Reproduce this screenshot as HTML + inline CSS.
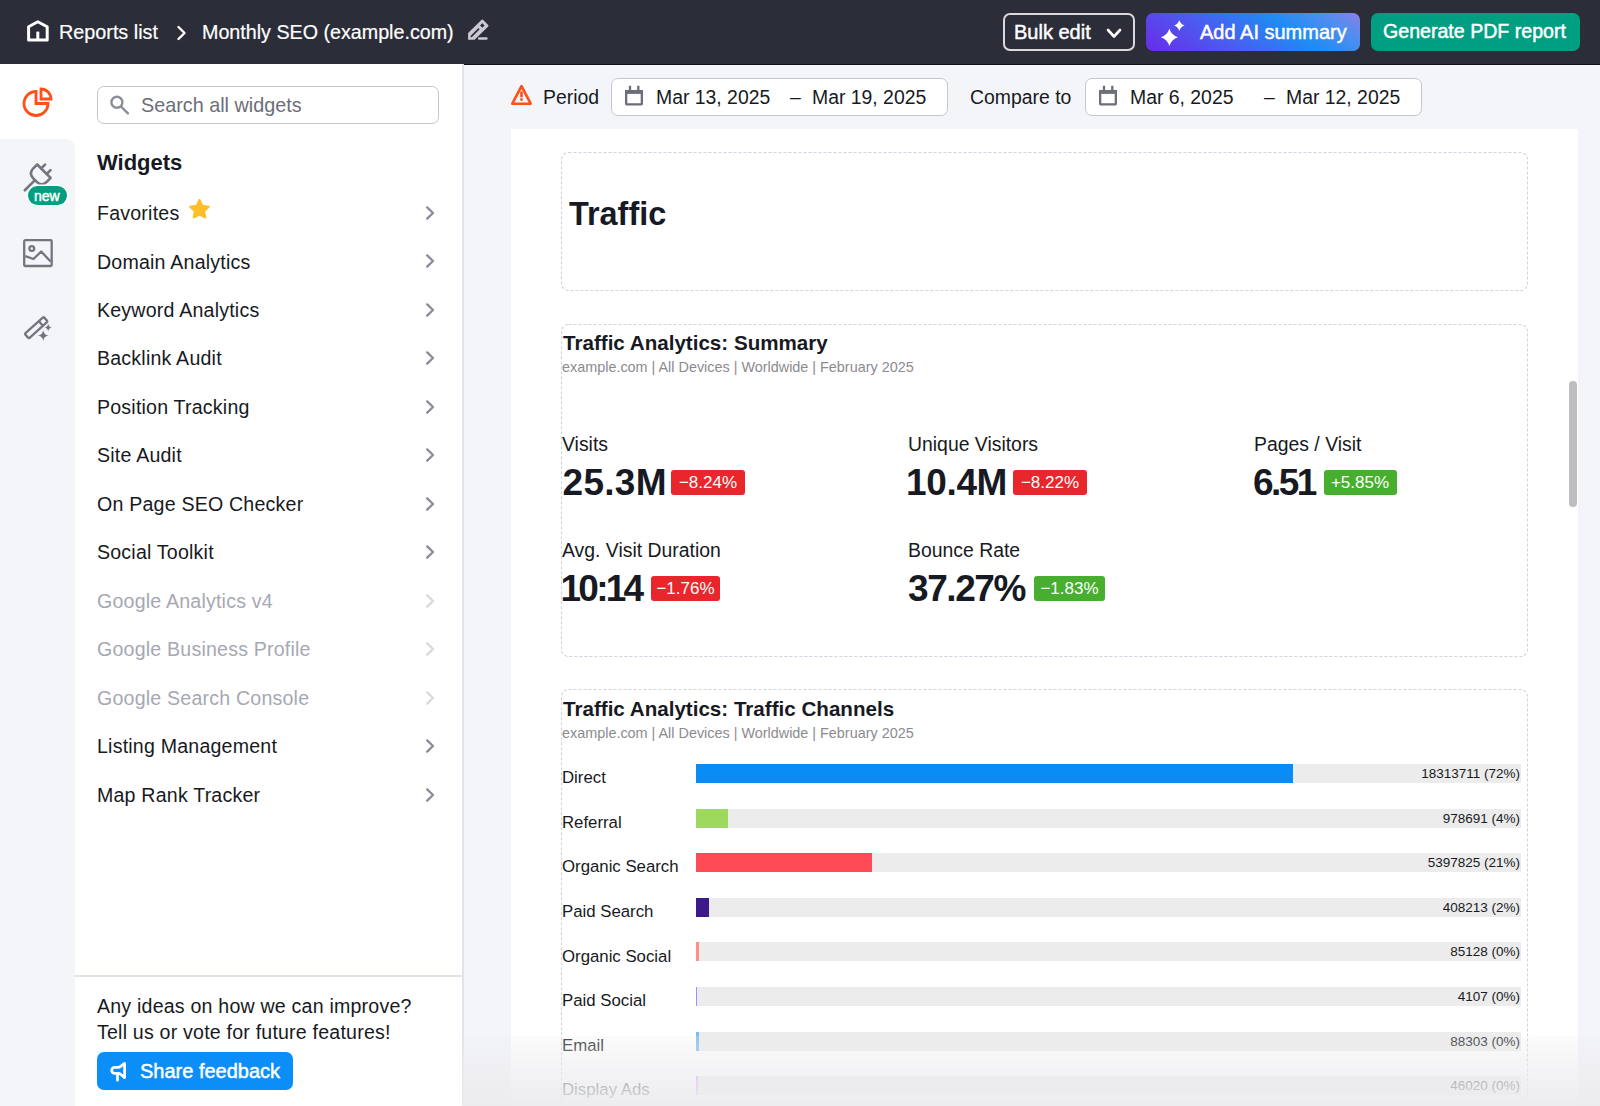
<!DOCTYPE html>
<html><head><meta charset="utf-8">
<style>
*{box-sizing:border-box;margin:0;padding:0}
html,body{width:1600px;height:1106px;overflow:hidden;background:#f4f5f9;font-family:"Liberation Sans",sans-serif;color:#171a22}
.a{position:absolute}
.t{position:absolute;white-space:pre;line-height:1}
#hdr{left:0;top:0;width:1600px;height:64.5px;background:#2b2d38;border-bottom:1.5px solid #0f1119}
.btn{position:absolute;border-radius:7px}
.bt{-webkit-text-stroke:.45px #fff}
.hd{-webkit-text-stroke:.2px #fff}
#rail{left:0;top:139px;width:75px;height:967px;background:#f4f5f9;border-top-right-radius:9px}
#side{left:0;top:64px;width:462px;height:1042px;background:#fff}
#sideb{left:462px;top:64px;width:1.5px;height:1042px;background:#e1e2ea}
.item{font-size:19.6px;color:#171a22;letter-spacing:.2px}
.dis{color:#a6a8b3}
.chev{position:absolute;left:425px;width:10px;height:14px}
#page{left:511px;top:129px;width:1067px;height:1000px;background:#fff}
.lbl{font-size:19.4px;color:#171a22}
.val{font-size:37px;font-weight:700;color:#171a22}
.badge{position:absolute;height:25px;border-radius:3px;color:#fff;font-size:17px;line-height:25px;text-align:center}
.red{background:#e8262b}
.grn{background:#47ae30}
.wt{font-size:20.6px;font-weight:700;color:#171a22}
.sub{font-size:14.4px;color:#8b8b8f}
.row{font-size:16.8px;color:#171a22}
.trk{position:absolute;left:696px;width:825px;height:19px;background:#ececec}
.bar{position:absolute;left:0;top:0;height:19px}
.num{position:absolute;right:1px;top:0;font-size:13.5px;line-height:19px;color:#171a22;white-space:pre}
#fade{left:462px;top:1036px;width:1138px;height:70px;background:linear-gradient(to bottom,rgba(236,236,239,.2) 0%,rgba(236,236,239,.62) 50%,rgba(236,236,239,.96) 100%)}
</style></head><body>

<!-- HEADER -->
<div id="hdr" class="a"></div>
<svg class="a" style="left:26px;top:19px" width="24" height="24" viewBox="0 0 24 24" fill="none" stroke="#fff" stroke-width="3" stroke-linejoin="round"><path d="M2.6 7.7 L11.8 2.7 L21.2 7.7 V21.1 H2.6 Z"/><path d="M11.8 12.6 V21"/></svg>
<div class="t hd" style="left:59px;top:22.5px;font-size:19.8px;color:#fff">Reports list</div>
<svg class="a" style="left:176px;top:25px" width="12" height="16" viewBox="0 0 12 16" fill="none" stroke="#fff" stroke-width="2.4" stroke-linecap="round" stroke-linejoin="round"><path d="M2.5 2 L8.5 8 L2.5 14"/></svg>
<div class="t hd" style="left:202px;top:22.5px;font-size:19.7px;color:#fff">Monthly SEO (example.com)</div>
<svg class="a" style="left:467px;top:19px" width="23" height="23" viewBox="0 0 23 23"><path fill="#c8c9d2" d="M1.1 14.1 L14.6 0.8 Q15.3 0.1 16 0.8 L21.2 6 Q21.9 6.7 21.2 7.4 L7.6 20.8 H1.1 Z"/><path d="M4.4 17.4 L11.6 10.2" stroke="#2b2d38" stroke-width="1.7" stroke-linecap="round"/><rect x="13.7" y="5" width="3.2" height="3.2" fill="#2b2d38" transform="rotate(45 15.3 6.6)"/><path d="M12.2 19.6 H19.4" stroke="#c8c9d2" stroke-width="2.5" stroke-linecap="round"/></svg>

<div class="btn" style="left:1003px;top:13px;width:132px;height:38px;border:2px solid #d9dadf"></div>
<div class="t bt" style="left:1014px;top:22px;font-size:20px;color:#fff">Bulk edit</div>
<svg class="a" style="left:1105px;top:27px" width="18" height="13" viewBox="0 0 18 13" fill="none" stroke="#fff" stroke-width="2.6" stroke-linecap="round" stroke-linejoin="round"><path d="M3 3 L9 9.5 L15 3"/></svg>

<div class="btn" style="left:1146px;top:13px;width:214px;height:38px;background:linear-gradient(35deg,#6a2be8 0%,#4b5cf0 35%,#1e8cf3 65%,#4f8ef0 85%,#8a7fe9 100%)"></div>
<svg class="a" style="left:1159px;top:19px" width="28" height="28" viewBox="0 0 28 28" fill="#fff"><path d="M10.40 9.70 Q12.55 16.15 19.00 18.30 Q12.55 20.45 10.40 26.90 Q8.25 20.45 1.80 18.30 Q8.25 16.15 10.40 9.70 Z M20.30 1.30 Q21.62 5.27 25.60 6.60 Q21.62 7.92 20.30 11.90 Q18.98 7.92 15.00 6.60 Q18.98 5.27 20.30 1.30 Z"/></svg>
<div class="t bt" style="left:1200px;top:22px;font-size:20px;color:#fff">Add AI summary</div>

<div class="btn" style="left:1371px;top:13px;width:209px;height:38px;background:#009f81"></div>
<div class="t bt" style="left:1383px;top:22px;font-size:19.6px;color:#fff">Generate PDF report</div>

<!-- LEFT RAIL -->
<div id="side" class="a"></div>
<div id="rail" class="a"></div>
<div id="sideb" class="a"></div>



<!-- MAIN TOOLBAR -->
<svg class="a" style="left:508px;top:81px" width="28" height="28" viewBox="0 0 28 28" fill="none" stroke="#fe5017" stroke-width="2.6" stroke-linejoin="round" stroke-linecap="round"><path d="M13.5 5.2 L22.7 22.7 H4.3 Z"/><path d="M13.5 11.6 V15.2"/><path d="M13.5 18.4 V18.7"/></svg>
<div class="t lbl" style="left:543px;top:87.5px">Period</div>
<div class="a" style="left:611px;top:78px;width:337px;height:38px;border:1.5px solid #c5c7cf;border-radius:7px;background:#fff"></div>
<svg class="a" style="left:622px;top:84px" width="24" height="24" viewBox="0 0 24 24" fill="none" stroke="#6c6e79" stroke-width="2.3"><rect x="4.15" y="7.15" width="15.7" height="13.2" rx="0.5"/><rect x="3" y="6" width="18" height="3.9" fill="#6c6e79" stroke="none"/><path d="M8 1.8 V6.5 M16.3 1.8 V6.5"/></svg>
<div class="t lbl" style="left:656px;top:87.5px">Mar 13, 2025</div>
<div class="t lbl" style="left:790px;top:87.5px">–</div>
<div class="t lbl" style="left:812px;top:87.5px">Mar 19, 2025</div>
<div class="t lbl" style="left:970px;top:87.5px">Compare to</div>
<div class="a" style="left:1085px;top:78px;width:337px;height:38px;border:1.5px solid #c5c7cf;border-radius:7px;background:#fff"></div>
<svg class="a" style="left:1096px;top:84px" width="24" height="24" viewBox="0 0 24 24" fill="none" stroke="#6c6e79" stroke-width="2.3"><rect x="4.15" y="7.15" width="15.7" height="13.2" rx="0.5"/><rect x="3" y="6" width="18" height="3.9" fill="#6c6e79" stroke="none"/><path d="M8 1.8 V6.5 M16.3 1.8 V6.5"/></svg>
<div class="t lbl" style="left:1130px;top:87.5px">Mar 6, 2025</div>
<div class="t lbl" style="left:1264px;top:87.5px">–</div>
<div class="t lbl" style="left:1286px;top:87.5px">Mar 12, 2025</div>

<!-- PAGE -->
<div id="page" class="a"></div>
<div class="a" style="left:1569px;top:381px;width:8px;height:126px;border-radius:4px;background:#bdbdc1"></div>
<svg class="a" style="left:560px;top:151px" width="970" height="960" viewBox="0 0 970 960" fill="none" stroke="#d2d3de" stroke-width="1.1" stroke-dasharray="3 2">
<rect x="1.5" y="1.5" width="966" height="138" rx="7"/>
<rect x="1.5" y="173.5" width="966" height="332" rx="7"/>
<rect x="1.5" y="538.5" width="966" height="460" rx="7"/>
</svg>
<div class="t" style="left:569px;top:198px;font-size:32.4px;font-weight:700;color:#171a22">Traffic</div>

<div class="t wt" style="left:563px;top:333px">Traffic Analytics: Summary</div>
<div class="t sub" style="left:562px;top:360px">example.com | All Devices | Worldwide | February 2025</div>
<div class="t lbl" style="left:562px;top:434.5px">Visits</div>
<div class="t val" style="left:562.5px;top:463.8px;letter-spacing:0.3px">25.3M</div>
<div class="badge red" style="left:671px;top:469.7px;width:74px">−8.24%</div>
<div class="t lbl" style="left:908px;top:434.5px">Unique Visitors</div>
<div class="t val" style="left:906px;top:463.8px;letter-spacing:-0.35px">10.4M</div>
<div class="badge red" style="left:1013px;top:469.7px;width:74px">−8.22%</div>
<div class="t lbl" style="left:1254px;top:434.5px">Pages / Visit</div>
<div class="t val" style="left:1253px;top:463.8px;letter-spacing:-2.6px">6.51</div>
<div class="badge grn" style="left:1323.5px;top:469.7px;width:73px">+5.85%</div>
<div class="t lbl" style="left:562px;top:541.0px">Avg. Visit Duration</div>
<div class="t val" style="left:560.5px;top:570.3px;letter-spacing:-2.75px">10:14</div>
<div class="badge red" style="left:651px;top:576.2px;width:69px">−1.76%</div>
<div class="t lbl" style="left:908px;top:541.0px">Bounce Rate</div>
<div class="t val" style="left:908px;top:570.3px;letter-spacing:-1.42px">37.27%</div>
<div class="badge grn" style="left:1034px;top:576.2px;width:71px">−1.83%</div>

<div class="t wt" style="left:563px;top:699px">Traffic Analytics: Traffic Channels</div>
<div class="t sub" style="left:562px;top:725.5px">example.com | All Devices | Worldwide | February 2025</div>
<div class="t row" style="left:562px;top:770.3px">Direct</div>
<div class="trk" style="top:764.2px"><div class="bar" style="width:596.7px;background:#0a8cf7"></div><div class="num">18313711 (72%)</div></div>
<div class="t row" style="left:562px;top:814.8px">Referral</div>
<div class="trk" style="top:808.8px"><div class="bar" style="width:31.9px;background:#9cd95c"></div><div class="num">978691 (4%)</div></div>
<div class="t row" style="left:562px;top:859.4px">Organic Search</div>
<div class="trk" style="top:853.3px"><div class="bar" style="width:175.9px;background:#ff4b55"></div><div class="num">5397825 (21%)</div></div>
<div class="t row" style="left:562px;top:903.9px">Paid Search</div>
<div class="trk" style="top:897.9px"><div class="bar" style="width:13.3px;background:#3c1a8b"></div><div class="num">408213 (2%)</div></div>
<div class="t row" style="left:562px;top:948.5px">Organic Social</div>
<div class="trk" style="top:942.4px"><div class="bar" style="width:2.8px;background:#ff8f80"></div><div class="num">85128 (0%)</div></div>
<div class="t row" style="left:562px;top:993.0px">Paid Social</div>
<div class="trk" style="top:987.0px"><div class="bar" style="width:1.2px;background:#a78bfa"></div><div class="num">4107 (0%)</div></div>
<div class="t row" style="left:562px;top:1037.6px">Email</div>
<div class="trk" style="top:1031.5px"><div class="bar" style="width:2.9px;background:#7dbcf5"></div><div class="num">88303 (0%)</div></div>
<div class="t row" style="left:562px;top:1082.1px">Display Ads</div>
<div class="trk" style="top:1076.0px"><div class="bar" style="width:1.5px;background:#d59cf0"></div><div class="num">46020 (0%)</div></div>
<div id="fade" class="a"></div>
<!-- RAIL ICONS -->
<svg class="a" style="left:22px;top:86px" width="32" height="32" viewBox="0 0 32 32" fill="none" stroke="#fe5017" stroke-width="2.8" stroke-linejoin="miter"><path d="M14 5.5 A12 12 0 1 0 26 17.5 H14 Z"/><path d="M19 3 A10 10 0 0 1 29 13 H19 Z"/></svg>
<svg class="a" style="left:22px;top:162px" width="32" height="32" viewBox="0 0 32 32" fill="none" stroke="#73767f" stroke-width="2.6" stroke-linecap="round" stroke-linejoin="round"><g transform="translate(21.9 9.2) rotate(45)"><path d="M-9.5 0 H9.5 V5.5 Q9.5 12.6 2.5 12.6 H-2.5 Q-9.5 12.6 -9.5 5.5 Z"/><path d="M0 12.6 V27"/><path d="M-3.9 0 V-5.5 M3.9 0 V-5.5"/></g></svg>
<div class="a" style="left:28px;top:185.5px;width:39px;height:19px;border-radius:10px;background:#009f81;box-shadow:0 0 0 1.6px #fff"></div>
<div class="t" style="left:34px;top:188.5px;font-size:14px;-webkit-text-stroke:.45px #fff;color:#fff">new</div>
<svg class="a" style="left:22px;top:238px" width="32" height="30" viewBox="0 0 32 30" fill="none" stroke="#73767f" stroke-width="2.3" stroke-linejoin="round"><rect x="2.2" y="2.2" width="27.5" height="25.8" rx="1"/><circle cx="9.8" cy="10.5" r="2.4"/><path d="M3.3 18.2 L11.5 21 L19.2 13.5 L28.6 23.5"/></svg>
<svg class="a" style="left:23px;top:313px" width="32" height="30" viewBox="0 0 32 30" stroke="#73767f" stroke-width="2.3" stroke-linejoin="round"><g transform="rotate(-42 13.2 14.7)"><rect x="0.5" y="11.6" width="25.4" height="6.2" rx="1" fill="none"/><path d="M19.5 11.6 V17.8" fill="none"/></g><path stroke="none" fill="#73767f" d="M20.2 17.2 Q20.9 21.9 25.6 22.6 Q20.9 23.3 20.2 28 Q19.5 23.3 14.8 22.6 Q19.5 21.9 20.2 17.2 Z M25.2 10.8 Q25.7 14.1 29 14.6 Q25.7 15.1 25.2 18.4 Q24.7 15.1 21.4 14.6 Q24.7 14.1 25.2 10.8 Z"/></svg>

<!-- SIDEBAR -->
<div class="a" style="left:97px;top:86px;width:342px;height:38px;border:1.5px solid #c5c7cf;border-radius:7px;background:#fff"></div>
<svg class="a" style="left:108px;top:94px" width="24" height="24" viewBox="0 0 24 24" fill="none" stroke="#8a8e9a" stroke-width="2.4" stroke-linecap="round"><circle cx="8.9" cy="8.2" r="5.5"/><path d="M12.9 12.3 L19.9 19.3"/></svg>
<div class="t" style="left:141px;top:96px;font-size:19.8px;color:#6c6e79">Search all widgets</div>
<div class="t" style="left:97px;top:152px;font-size:22px;font-weight:700;color:#171a22">Widgets</div>
<div class="t item" style="left:97px;top:203.5px">Favorites</div>
<svg class="a" style="left:423px;top:203.8px" width="14" height="18" viewBox="0 0 14 18" fill="none" stroke="#8a8e9b" stroke-width="2.4" stroke-linecap="round" stroke-linejoin="round"><path d="M4.2 3.4 L10 9 L4.2 14.6"/></svg>
<div class="t item" style="left:97px;top:253.0px">Domain Analytics</div>
<svg class="a" style="left:423px;top:252.3px" width="14" height="18" viewBox="0 0 14 18" fill="none" stroke="#8a8e9b" stroke-width="2.4" stroke-linecap="round" stroke-linejoin="round"><path d="M4.2 3.4 L10 9 L4.2 14.6"/></svg>
<div class="t item" style="left:97px;top:300.5px">Keyword Analytics</div>
<svg class="a" style="left:423px;top:300.8px" width="14" height="18" viewBox="0 0 14 18" fill="none" stroke="#8a8e9b" stroke-width="2.4" stroke-linecap="round" stroke-linejoin="round"><path d="M4.2 3.4 L10 9 L4.2 14.6"/></svg>
<div class="t item" style="left:97px;top:349.0px">Backlink Audit</div>
<svg class="a" style="left:423px;top:349.3px" width="14" height="18" viewBox="0 0 14 18" fill="none" stroke="#8a8e9b" stroke-width="2.4" stroke-linecap="round" stroke-linejoin="round"><path d="M4.2 3.4 L10 9 L4.2 14.6"/></svg>
<div class="t item" style="left:97px;top:397.5px">Position Tracking</div>
<svg class="a" style="left:423px;top:397.8px" width="14" height="18" viewBox="0 0 14 18" fill="none" stroke="#8a8e9b" stroke-width="2.4" stroke-linecap="round" stroke-linejoin="round"><path d="M4.2 3.4 L10 9 L4.2 14.6"/></svg>
<div class="t item" style="left:97px;top:446.0px">Site Audit</div>
<svg class="a" style="left:423px;top:446.3px" width="14" height="18" viewBox="0 0 14 18" fill="none" stroke="#8a8e9b" stroke-width="2.4" stroke-linecap="round" stroke-linejoin="round"><path d="M4.2 3.4 L10 9 L4.2 14.6"/></svg>
<div class="t item" style="left:97px;top:494.5px">On Page SEO Checker</div>
<svg class="a" style="left:423px;top:494.8px" width="14" height="18" viewBox="0 0 14 18" fill="none" stroke="#8a8e9b" stroke-width="2.4" stroke-linecap="round" stroke-linejoin="round"><path d="M4.2 3.4 L10 9 L4.2 14.6"/></svg>
<div class="t item" style="left:97px;top:543.0px">Social Toolkit</div>
<svg class="a" style="left:423px;top:543.3px" width="14" height="18" viewBox="0 0 14 18" fill="none" stroke="#8a8e9b" stroke-width="2.4" stroke-linecap="round" stroke-linejoin="round"><path d="M4.2 3.4 L10 9 L4.2 14.6"/></svg>
<div class="t item dis" style="left:97px;top:591.5px">Google Analytics v4</div>
<svg class="a" style="left:423px;top:591.8px" width="14" height="18" viewBox="0 0 14 18" fill="none" stroke="#d9dadf" stroke-width="2.4" stroke-linecap="round" stroke-linejoin="round"><path d="M4.2 3.4 L10 9 L4.2 14.6"/></svg>
<div class="t item dis" style="left:97px;top:640.0px">Google Business Profile</div>
<svg class="a" style="left:423px;top:640.3px" width="14" height="18" viewBox="0 0 14 18" fill="none" stroke="#d9dadf" stroke-width="2.4" stroke-linecap="round" stroke-linejoin="round"><path d="M4.2 3.4 L10 9 L4.2 14.6"/></svg>
<div class="t item dis" style="left:97px;top:688.5px">Google Search Console</div>
<svg class="a" style="left:423px;top:688.8px" width="14" height="18" viewBox="0 0 14 18" fill="none" stroke="#d9dadf" stroke-width="2.4" stroke-linecap="round" stroke-linejoin="round"><path d="M4.2 3.4 L10 9 L4.2 14.6"/></svg>
<div class="t item" style="left:97px;top:737.0px">Listing Management</div>
<svg class="a" style="left:423px;top:737.3px" width="14" height="18" viewBox="0 0 14 18" fill="none" stroke="#8a8e9b" stroke-width="2.4" stroke-linecap="round" stroke-linejoin="round"><path d="M4.2 3.4 L10 9 L4.2 14.6"/></svg>
<div class="t item" style="left:97px;top:785.5px">Map Rank Tracker</div>
<svg class="a" style="left:423px;top:785.8px" width="14" height="18" viewBox="0 0 14 18" fill="none" stroke="#8a8e9b" stroke-width="2.4" stroke-linecap="round" stroke-linejoin="round"><path d="M4.2 3.4 L10 9 L4.2 14.6"/></svg>
<svg class="a" style="left:186.5px;top:196.5px" width="25" height="25" viewBox="0 0 24 24" fill="#fdbe2c" stroke="#fdbe2c" stroke-width="2" stroke-linejoin="round"><path d="M12 2.9 L14.8 8.5 L20.9 9.3 L16.4 13.6 L17.6 19.7 L12 16.8 L6.4 19.7 L7.6 13.6 L3.1 9.3 L9.2 8.5 Z"/></svg>
<div class="a" style="left:75px;top:975px;width:387px;height:1.5px;background:#e1e2ea"></div>
<div class="t item" style="left:97px;top:996.5px">Any ideas on how we can improve?</div>
<div class="t item" style="left:97px;top:1022.5px">Tell us or vote for future features!</div>
<div class="a" style="left:97px;top:1052px;width:196px;height:38px;border-radius:7px;background:#0b8ef8"></div>
<svg class="a" style="left:108px;top:1060px" width="22" height="24" viewBox="0 0 22 24" fill="none" stroke="#fff" stroke-width="2.7" stroke-linejoin="round" stroke-linecap="round"><path d="M10.2 7.3 Q11.5 7.3 12.6 6.4 L16.6 3.4 V17.6 L12.6 14.3 Q11.5 13.4 10.2 13.4 H6.7 A3.05 3.05 0 0 1 6.7 7.3 Z"/><path d="M9.5 13.8 V20.2"/></svg>
<div class="t bt" style="left:140px;top:1060.5px;font-size:20px;color:#fff">Share feedback</div>
</body></html>
